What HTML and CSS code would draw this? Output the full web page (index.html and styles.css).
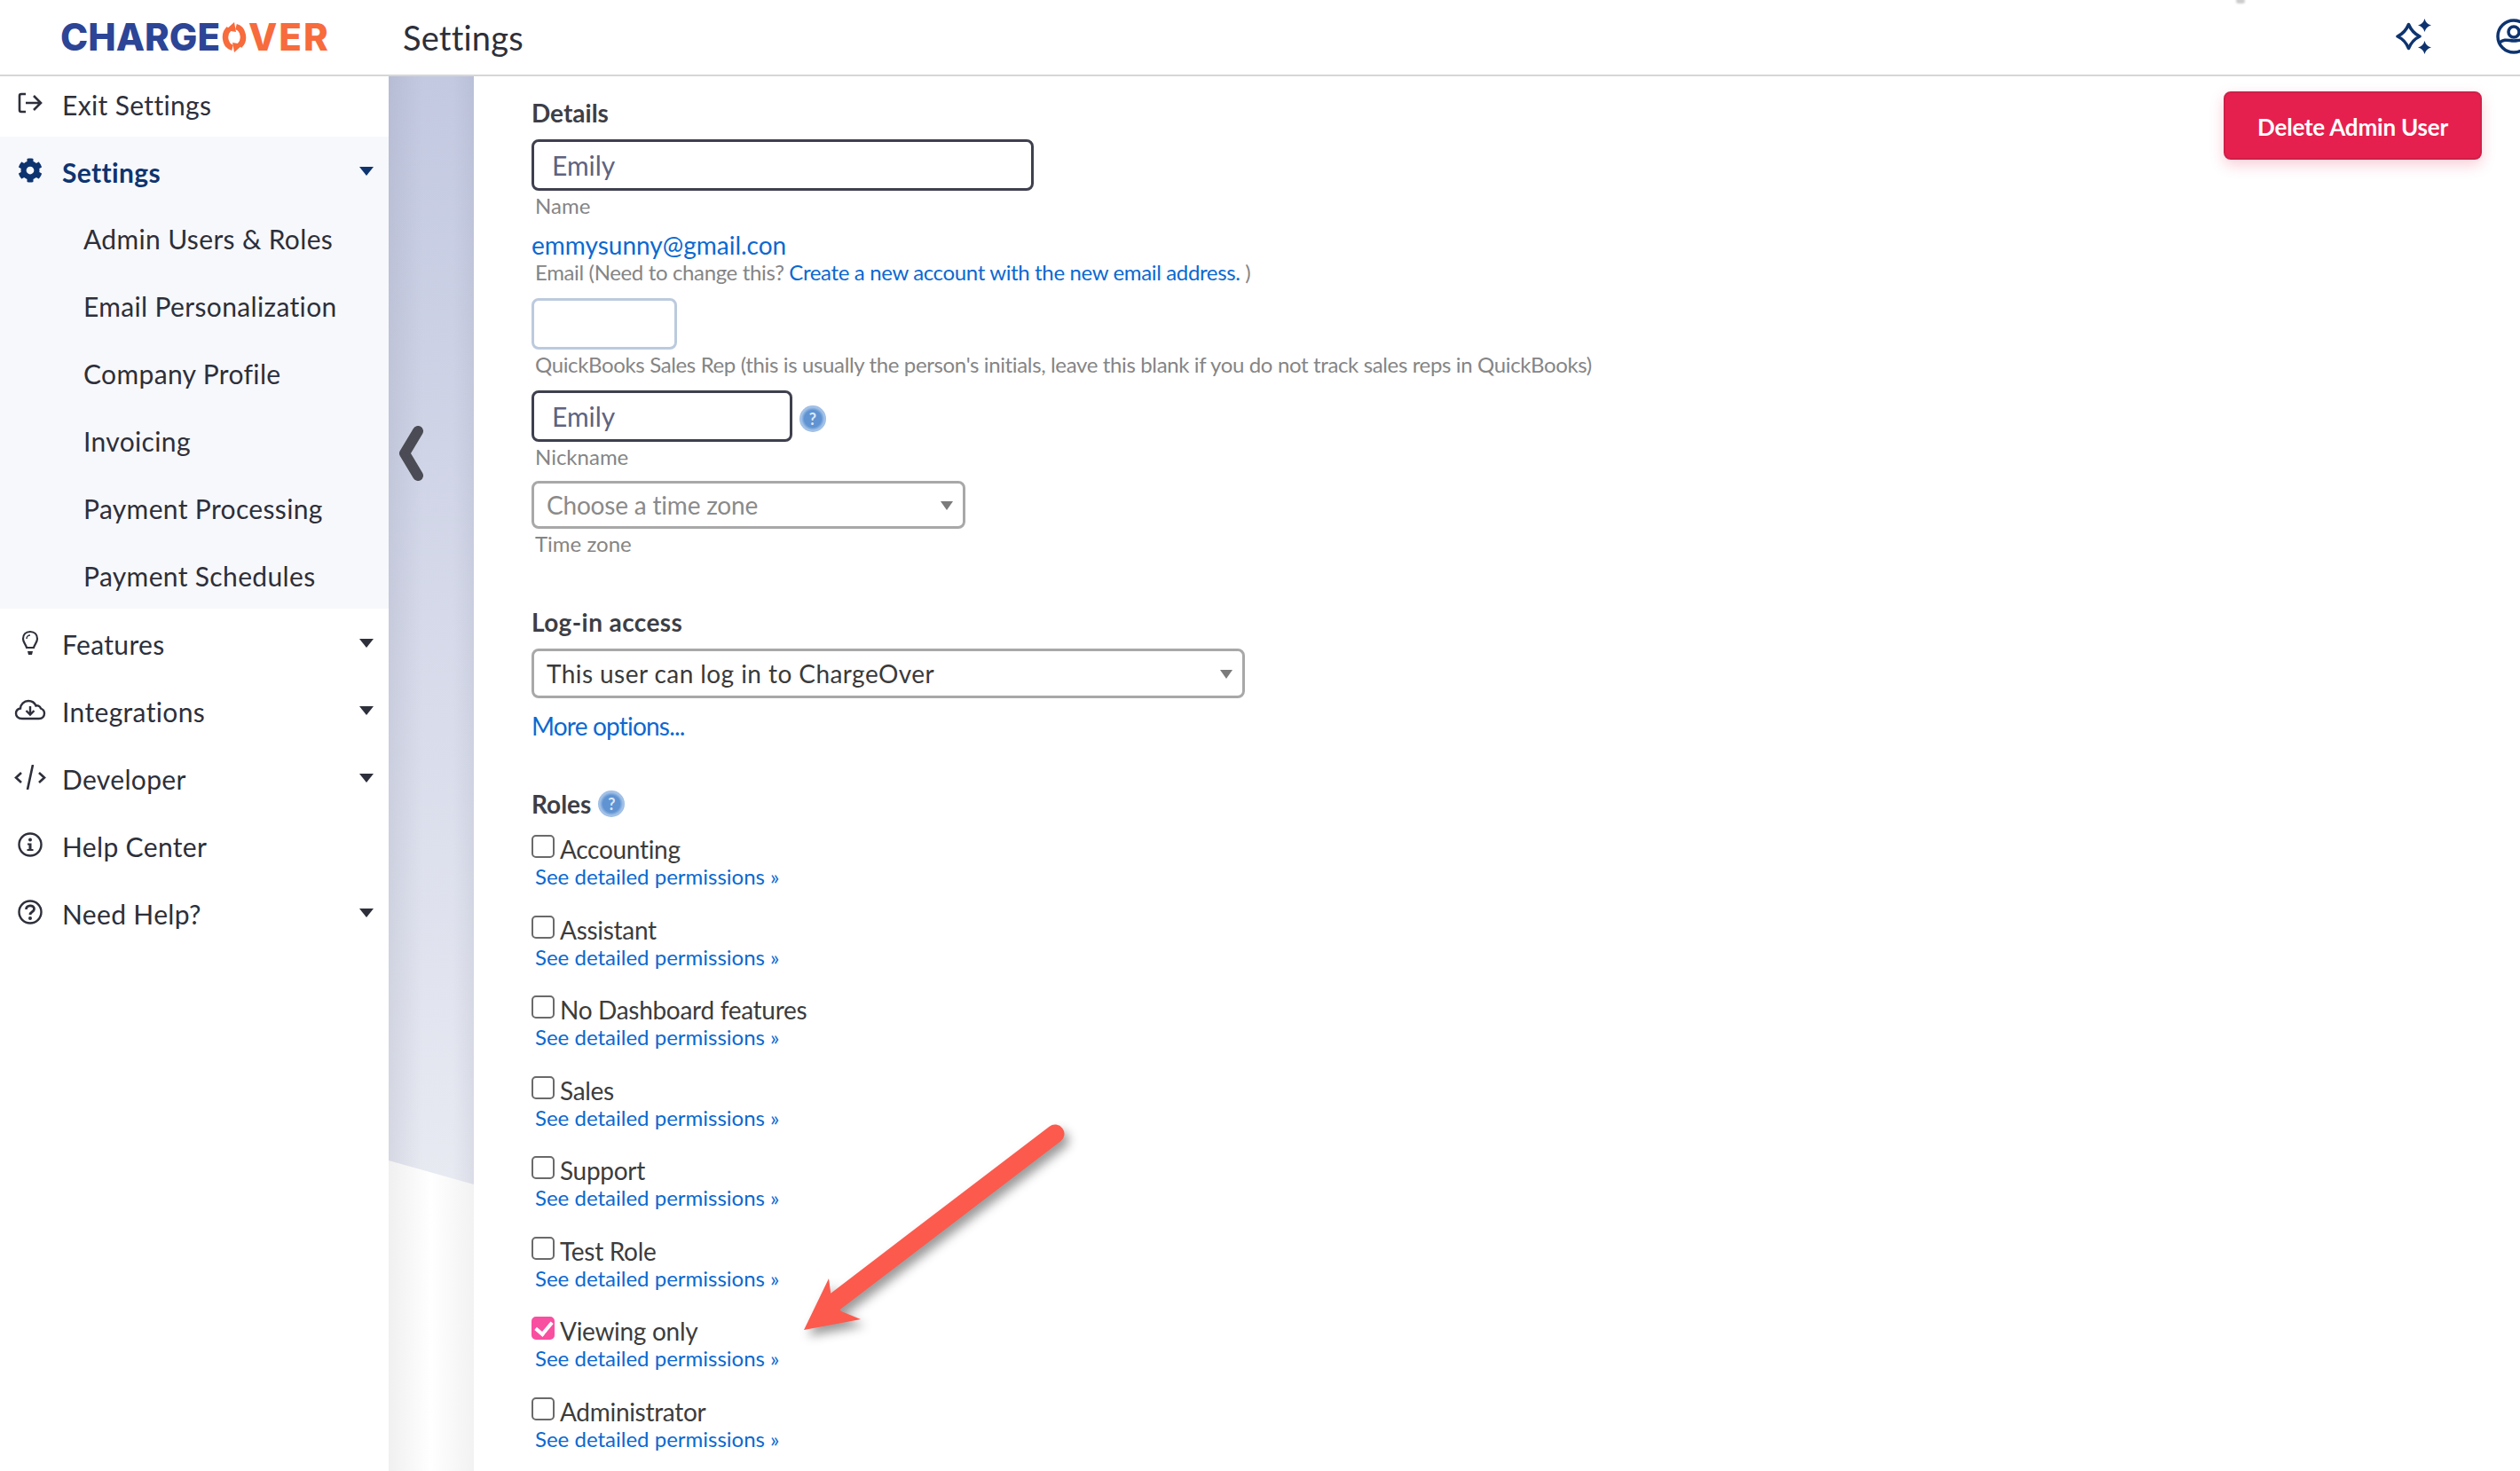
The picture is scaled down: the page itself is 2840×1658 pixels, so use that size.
FILE: index.html
```html
<!DOCTYPE html>
<html lang="en">
<head>
<meta charset="utf-8">
<title>Settings</title>
<link rel="stylesheet" href="styles.css">
</head>
<body>
<header class="topbar">
  <i class="speck"></i>
  <div class="logo"><span class="logo-blue">CHARGE</span><svg class="logo-o" viewBox="0 0 28 34"><path d="M16 5.200 A10 12 0 0 1 20 26.500 M12 28.800 A10 12 0 0 1 8 7.500" fill="none" stroke="#f76b3c" stroke-width="6.500"/><path d="M14 0 L16 11 L4 9Z M14 34 L12 23 L24 25Z" fill="#f76b3c"/></svg><span class="logo-orange">VER</span></div>
  <h1 class="page-title">Settings</h1>
  <div class="top-icons">
    <svg class="sparkle" viewBox="0 0 40 40"><path d="M14.500 6.500 Q18.500 16 27 20 Q18.500 24 14.500 33.500 Q10.500 24 2 20 Q10.500 16 14.500 6.500Z" fill="none" stroke="#0e3470" stroke-width="3.500" stroke-linejoin="round"/><path d="M32.500 0 Q34 6 40 7.500 Q34 9 32.500 15 Q31 9 25 7.500 Q31 6 32.500 0Z M32.500 25 Q34 31 40 32.500 Q34 34 32.500 40 Q31 34 25 32.500 Q31 31 32.500 25Z" fill="#0e3470"/></svg>
    <svg class="account" viewBox="0 0 40 40"><circle cx="20" cy="20" r="18" fill="none" stroke="#0e3470" stroke-width="3.500"/><circle cx="20" cy="15" r="6" fill="none" stroke="#0e3470" stroke-width="3.500"/><path d="M4 27 C10 22 14 25 20 25 C26 25 30 22 36 27" fill="none" stroke="#0e3470" stroke-width="3.500"/></svg>
  </div>
</header>
<div class="layout">
  <nav class="sidebar">
    <a class="nav-row nav-first"><svg class="nav-icon" viewBox="0 0 28 28"><path d="M9 4 H4 Q2 4 2 6 V22 Q2 24 4 24 H9" fill="none" stroke="#2d2f3a" stroke-width="2.600"/><path d="M9 14 H26 M18 6 L26 14 L18 22" fill="none" stroke="#2d2f3a" stroke-width="2.600"/></svg><span>Exit Settings</span></a>
    <div class="nav-group">
      <a class="nav-row nav-active"><svg class="nav-icon" viewBox="0 0 512 512"><path fill="#0e3470" d="M487.4 315.7l-42.6-24.6c4.300-23.200 4.300-47 0-70.200l42.600-24.600c4.900-2.800 7.100-8.600 5.500-14-11.100-35.600-30-67.800-54.700-94.600-3.800-4.100-10-5.100-14.800-2.300L380.800 110c-17.900-15.400-38.500-27.300-60.800-35.100V25.800c0-5.600-3.900-10.500-9.400-11.700-36.700-8.200-74.300-7.800-109.200 0-5.500 1.200-9.400 6.100-9.400 11.700V75c-22.200 7.900-42.800 19.800-60.800 35.100L88.700 85.500c-4.900-2.800-11-1.900-14.800 2.300-24.700 26.700-43.600 58.900-54.700 94.600-1.700 5.400.6 11.200 5.500 14L67.300 221c-4.300 23.200-4.300 47 0 70.200l-42.600 24.600c-4.900 2.800-7.100 8.600-5.500 14 11.100 35.600 30 67.800 54.700 94.600 3.800 4.100 10 5.100 14.800 2.300l42.600-24.600c17.900 15.400 38.500 27.300 60.800 35.100v49.200c0 5.600 3.900 10.500 9.400 11.700 36.700 8.200 74.300 7.800 109.200 0 5.500-1.200 9.400-6.100 9.400-11.700v-49.200c22.200-7.900 42.800-19.800 60.800-35.100l42.600 24.600c4.900 2.800 11 1.900 14.800-2.300 24.700-26.700 43.600-58.900 54.700-94.600 1.500-5.500-.7-11.300-5.600-14.100zM256 336c-44.100 0-80-35.900-80-80s35.900-80 80-80 80 35.900 80 80-35.900 80-80 80z"/></svg><span>Settings</span><i class="caret caret-active"></i></a>
      <a class="nav-row nav-sub">Admin Users &amp; Roles</a>
      <a class="nav-row nav-sub">Email Personalization</a>
      <a class="nav-row nav-sub">Company Profile</a>
      <a class="nav-row nav-sub">Invoicing</a>
      <a class="nav-row nav-sub">Payment Processing</a>
      <a class="nav-row nav-sub">Payment Schedules</a>
    </div>
    <a class="nav-row"><svg class="nav-icon" viewBox="0 0 28 28"><path d="M14 2 C9 2 6 5.500 6 10 C6 14 9 16 10 20 H18 C19 16 22 14 22 10 C22 5.500 19 2 14 2Z" fill="none" stroke="#2d2f3a" stroke-width="2.200"/><path d="M11 24 H17 L16 28 H12Z" fill="#2d2f3a"/><path d="M10 10 C10 8 11.500 6 14 6" fill="none" stroke="#2d2f3a" stroke-width="1.500"/></svg><span>Features</span><i class="caret"></i></a>
    <a class="nav-row"><svg class="nav-icon nav-icon-wide" viewBox="0 0 36 28"><path d="M9 24 C4 24 2 21 2 18 C2 15 4 13 7 12.500 C7 8 11 4 16 4 C20 4 23 6 24.500 9.500 C26 9 29 9.500 30 12.500 C32.500 13.500 34 15.500 34 18 C34 21 32 24 28 24Z" fill="none" stroke="#2d2f3a" stroke-width="2.400"/><path d="M18 10 V19 M13.500 15 L18 19.500 L22.500 15" fill="none" stroke="#2d2f3a" stroke-width="2.400"/></svg><span>Integrations</span><i class="caret"></i></a>
    <a class="nav-row"><svg class="nav-icon nav-icon-wide" viewBox="0 0 36 28"><path d="M8 9 L2 14.500 L8 20 M28 9 L34 14.500 L28 20 M21 0 L15 28" fill="none" stroke="#2d2f3a" stroke-width="2.600"/></svg><span>Developer</span><i class="caret"></i></a>
    <a class="nav-row"><svg class="nav-icon" viewBox="0 0 28 28"><circle cx="14" cy="14" r="12.500" fill="none" stroke="#2d2f3a" stroke-width="2.400"/><circle cx="14" cy="8.500" r="2" fill="#2d2f3a"/><path d="M11 12.500 H15.500 V19 H17.500 V21 H10.500 V19 H12.500 V14.500 H11Z" fill="#2d2f3a"/></svg><span>Help Center</span></a>
    <a class="nav-row"><svg class="nav-icon" viewBox="0 0 28 28"><circle cx="14" cy="14" r="12.500" fill="none" stroke="#2d2f3a" stroke-width="2.400"/><path d="M9.500 11 C9.500 5.500 18.500 5.500 18.500 10.500 C18.500 14 14 13.500 14 17" fill="none" stroke="#2d2f3a" stroke-width="2.800"/><circle cx="14" cy="21" r="2" fill="#2d2f3a"/></svg><span>Need Help?</span><i class="caret"></i></a>
  </nav>
  <div class="gutter">
    <div class="gutter-wave"></div>
    <svg class="collapse" viewBox="0 0 30 62"><path d="M23 6 L8 31 L23 56" fill="none" stroke="#4a4b54" stroke-width="12" stroke-linecap="round" stroke-linejoin="round"/></svg>
  </div>
  <main class="content">
    <form class="form">
      <h2 class="heading heading-first">Details</h2>
      <input class="field field-name" type="text" value="Emily">
      <p class="hint">Name</p>
      <a class="email">emmysunny@gmail.con</a>
      <p class="hint hint-tight hint-long">Email (Need to change this? <a class="link">Create a new account with the new email address.</a> )</p>
      <input class="field field-rep field-empty" type="text">
      <p class="hint hint-long">QuickBooks Sales Rep (this is usually the person's initials, leave this blank if you do not track sales reps in QuickBooks)</p>
      <div class="nick-row">
        <input class="field field-nick" type="text" value="Emily">
        <span class="help">?</span>
      </div>
      <p class="hint">Nickname</p>
      <div class="select select-tz"><span class="select-placeholder">Choose a time zone</span></div>
      <p class="hint">Time zone</p>
      <h2 class="heading heading-login">Log-in access</h2>
      <div class="select select-login"><span>This user can log in to ChargeOver</span></div>
      <a class="more">More options...</a>
      <h2 class="heading heading-roles">Roles <span class="help help-inline">?</span></h2>
      <div class="roles">
        <div class="role"><label class="role-label"><input type="checkbox" class="check">Accounting</label><a class="link role-link">See detailed permissions »</a></div>
        <div class="role"><label class="role-label"><input type="checkbox" class="check">Assistant</label><a class="link role-link">See detailed permissions »</a></div>
        <div class="role"><label class="role-label"><input type="checkbox" class="check">No Dashboard features</label><a class="link role-link">See detailed permissions »</a></div>
        <div class="role"><label class="role-label"><input type="checkbox" class="check">Sales</label><a class="link role-link">See detailed permissions »</a></div>
        <div class="role"><label class="role-label"><input type="checkbox" class="check">Support</label><a class="link role-link">See detailed permissions »</a></div>
        <div class="role"><label class="role-label"><input type="checkbox" class="check">Test Role</label><a class="link role-link">See detailed permissions »</a></div>
        <div class="role"><label class="role-label"><input type="checkbox" class="check" checked>Viewing only</label><a class="link role-link">See detailed permissions »</a></div>
        <div class="role"><label class="role-label"><input type="checkbox" class="check">Administrator</label><a class="link role-link">See detailed permissions »</a></div>
      </div>
    </form>
    <div class="actions"><button class="btn-delete" type="button">Delete Admin User</button></div>
    <svg class="arrow" viewBox="0 0 340 270"><path d="M315 22 L66 212" fill="none" stroke="#fc5a4d" stroke-width="21" stroke-linecap="round"/><path d="M32 243 L60 185 L63 207 L74 222 L96 231Z" fill="#fc5a4d"/></svg>
  </main>
</div>
</body>
</html>
```
FILE: styles.css
```css
* { box-sizing: border-box; }
html, body { margin: 0; height: 100%; overflow: hidden; background: #fff; }
body { font-family: Lato, "Open Sans", sans-serif; color: #2d2f3a; display: flex; flex-direction: column; height: 1658px; }
h1, h2, p { margin: 0; font-weight: normal; }

.topbar { position: relative; flex: 0 0 86px; height: 86px; display: flex; align-items: center; border-bottom: 2px solid #d6d6d6; padding-left: 68px; overflow: hidden; }
.speck { position: absolute; left: 2520px; top: -2px; width: 10px; height: 6px; border-radius: 3px; background: #ccc; filter: blur(1px); }
.logo { width: 386px; display: flex; align-items: center; font-family: Inter, sans-serif; font-weight: 800; font-size: 42px; line-height: 1; }
.logo-blue { color: #2c4596; }
.logo-orange { color: #f76b3c; letter-spacing: 2px; }
.logo-o { width: 28px; height: 34px; margin: 0 2px 0 2px; flex: none; }
.page-title { font-size: 38px; letter-spacing: .2px; color: #2d2f3a; }
.top-icons { margin: -3px -13px 0 auto; display: flex; align-items: center; gap: 73px; }
.sparkle { width: 40px; height: 40px; display: block; }
.account { width: 40px; height: 40px; display: block; flex: none; }

.layout { flex: 1; display: flex; min-height: 0; }
.sidebar { flex: 0 0 438px; background: #fff; }
.nav-row { height: 76px; display: flex; align-items: center; position: relative; padding: 4px 0 0 70px; font-size: 30px; letter-spacing: .35px; color: #2d2f3a; }
.nav-first { height: 68px; padding: 0 0 4px 70px; }
.nav-first .nav-icon { margin-top: -18px; }
.nav-icon { position: absolute; left: 20px; top: 50%; width: 28px; height: 28px; margin-top: -14px; }
.nav-icon-wide { left: 16px; width: 36px; }
.nav-group { background: #f7f8fb; }
.nav-active { color: #0e3470; font-weight: 700; }
.nav-row.nav-sub { padding-left: 94px; padding-top: 2px; }
.caret { position: absolute; left: 405px; top: 34px; width: 0; height: 0; border-left: 8.500px solid transparent; border-right: 8.500px solid transparent; border-top: 10px solid #2d2f3a; }
.caret-active { border-top-color: #0e3470; }

.gutter { flex: 0 0 96px; position: relative; background: linear-gradient(90deg, #f0f0f0, #fff 50%, #f2f2f2); }
.gutter-wave { position: absolute; left: 0; right: 0; top: 0; height: 1249px; clip-path: polygon(0 0, 100% 0, 100% 100%, 0 1222px); background: linear-gradient(90deg, rgba(120,125,150,.16), rgba(120,125,150,0) 40%, rgba(120,125,150,0) 75%, rgba(120,125,150,.12)), linear-gradient(180deg, #c3c9e1, #e8eaf2); }
.collapse { position: absolute; left: 10px; top: 394px; width: 30px; height: 62px; }

.content { flex: 1; min-width: 0; position: relative; display: flex; justify-content: space-between; padding: 0 43px 0 65px; }
.form { display: flex; flex-direction: column; align-items: flex-start; }
.form > * { flex: none; }
.heading { font-size: 28px; line-height: 34px; font-weight: 700; color: #3d3e46; }
.heading-first { margin-top: 24px; }
.heading-login { margin-top: 55px; letter-spacing: .4px; }
.heading-roles { margin-top: 55px; display: flex; align-items: center; gap: 8px; }
.field { display: block; height: 58px; border: 3px solid #3f404e; border-radius: 8px; padding: 0 20px; font: 30px Lato, sans-serif; color: #5f6380; background: #fff; outline: none; }
.field-name { width: 566px; margin-top: 13px; }
.field-rep { width: 164px; margin-top: 13px; }
.field-empty { border-color: #bccade; }
.field-nick { width: 294px; }
.hint { margin: 3px 0 2px 4px; font-size: 24px; line-height: 28px; color: #858585; }
.hint-tight { margin-top: -1px; }
.hint-long { letter-spacing: -.36px; }
.link, .email, .more { color: #0b69d0; text-decoration: none; }
.email { margin: 12px 0 2px; font-size: 28px; line-height: 32px; }
.nick-row { display: flex; align-items: center; margin-top: 13px; gap: 8px; }
.help { display: inline-flex; align-items: center; justify-content: center; width: 30px; height: 30px; border-radius: 50%; background: radial-gradient(circle, #5f93d2 45%, #a7c4e8 62%, #7aa7dc 90%); color: #dce8f6; font-size: 18px; line-height: 1; font-weight: 700; margin-top: 6px; }
.help-inline { margin-top: 0; }
.select { position: relative; display: flex; align-items: center; border: 3px solid #a8a8a8; border-radius: 8px; padding-left: 14px; font-size: 28px; color: #3a3a3a; background: #fff; }
.select::after { content: ""; position: absolute; right: 11px; top: 50%; margin-top: -4px; border-left: 7.500px solid transparent; border-right: 7.500px solid transparent; border-top: 10px solid #7b7b7b; }
.select-tz { width: 489px; height: 54px; margin-top: 11px; }
.select-placeholder { color: #8a8a8a; letter-spacing: -.2px; }
.select-login { width: 804px; height: 56px; margin-top: 13px; letter-spacing: .43px; }
.more { margin-top: 15px; font-size: 28px; line-height: 32px; letter-spacing: -.8px; }
.roles { width: 100%; margin-top: 18px; }
.role { height: 90.500px; }
.role-label { display: flex; align-items: flex-start; height: 33px; font-size: 28px; line-height: 32px; letter-spacing: -.3px; color: #3c3c3c; }
.check { appearance: none; flex: none; width: 26px; height: 26px; margin: 0 6px 0 0; border: 2.500px solid #6a6a6a; border-radius: 5px; background: #fff; position: relative; }
.check:checked { background: #f94fa0; border-color: #f94fa0; }
.check:checked::after { content: ""; position: absolute; left: 6px; top: 0; width: 8px; height: 15px; border: solid #fff; border-width: 0 4px 4px 0; transform: rotate(40deg); }
.role-link { display: block; margin-left: 4px; font-size: 24px; line-height: 28px; }

.actions { padding-top: 17px; }
.btn-delete { width: 291px; height: 77px; padding: 2px 0 0; border: 2px solid #cf1f48; border-radius: 8px; background: #e6204e; color: #fff; font: 700 26px Lato, sans-serif; letter-spacing: -.2px; box-shadow: 0 6px 16px rgba(230,32,78,.22); }
.arrow { position: absolute; left: 340px; top: 1170px; width: 340px; height: 270px; filter: drop-shadow(5px 7px 6px rgba(0,0,0,.4)); pointer-events: none; }
```
